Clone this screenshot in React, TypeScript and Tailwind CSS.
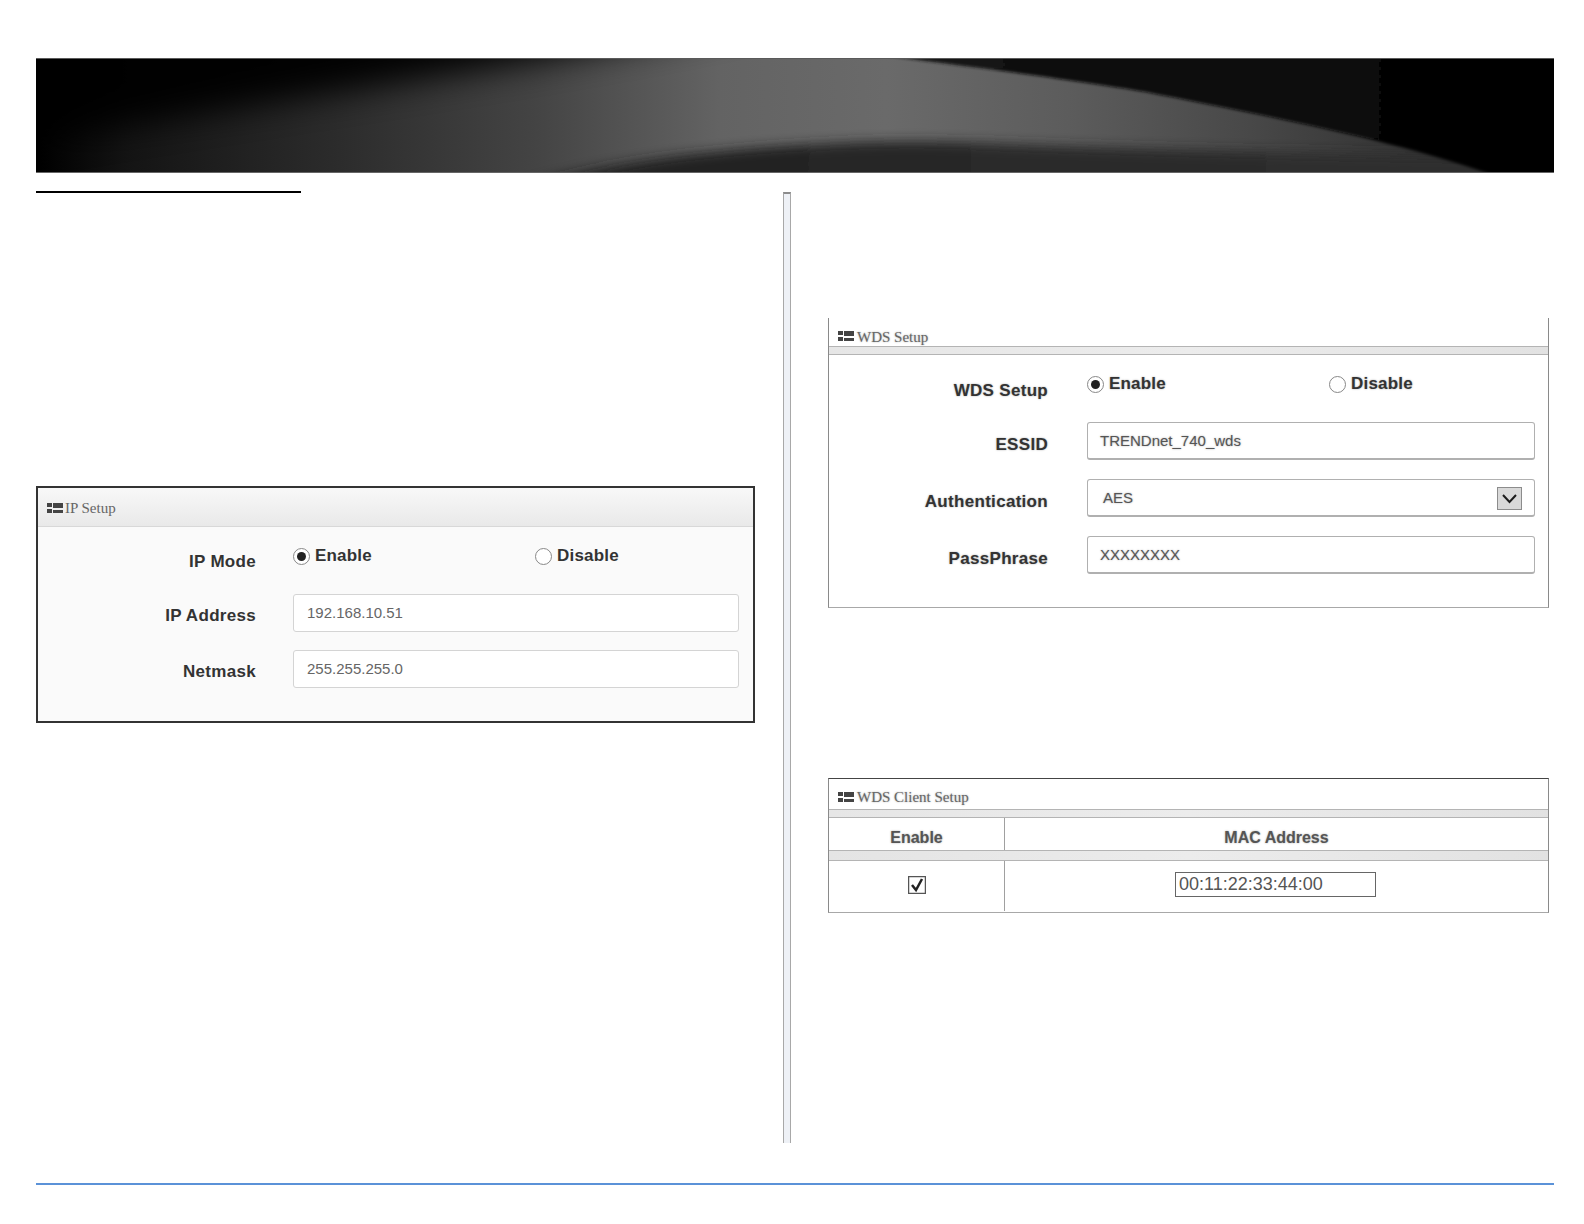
const sans = "font-['Liberation_Sans',Arial,sans-serif]";
const serif = "font-['Liberation_Serif','Times_New_Roman',serif]";
const halo = "[text-shadow:0_0_2px_#aaaaaa]";

const Banner = () => (
  <svg width="1518" height="115" viewBox="0 0 1518 115" className="block shrink-0">
    <defs>
      <linearGradient id="sweep" x1="0" x2="1" y1="0" y2="0">
        <stop offset="0" stopColor="#000000" />
        <stop offset="0.06" stopColor="#141414" />
        <stop offset="0.2" stopColor="#2c2c2c" />
        <stop offset="0.33" stopColor="#444444" />
        <stop offset="0.45" stopColor="#636363" />
        <stop offset="0.56" stopColor="#6a6a6a" />
        <stop offset="0.68" stopColor="#5c5c5c" />
        <stop offset="0.8" stopColor="#484848" />
        <stop offset="0.9" stopColor="#343434" />
        <stop offset="1" stopColor="#1e1e1e" />
      </linearGradient>
      <linearGradient id="low" x1="0" x2="1" y1="0" y2="0">
        <stop offset="0" stopColor="#1c1c1c" />
        <stop offset="0.5" stopColor="#2a2a2a" />
        <stop offset="1" stopColor="#303030" />
      </linearGradient>
      <linearGradient id="night" x1="0" x2="1" y1="0" y2="0">
        <stop offset="0" stopColor="#161616" />
        <stop offset="0.5" stopColor="#0c0c0c" />
        <stop offset="1" stopColor="#000000" />
      </linearGradient>
      <filter id="soft" x="-20%" y="-80%" width="140%" height="260%">
        <feGaussianBlur stdDeviation="30 16" />
      </filter>
      <filter id="softLow" x="-10%" y="-80%" width="120%" height="260%">
        <feGaussianBlur stdDeviation="14 6" />
      </filter>
      <filter id="edge" x="-5%" y="-10%" width="110%" height="120%">
        <feGaussianBlur stdDeviation="1.5" />
      </filter>
      <clipPath id="box">
        <rect width="1518" height="115" />
      </clipPath>
    </defs>
    <g clipPath="url(#box)">
      <rect width="1518" height="115" fill="url(#sweep)" />
      <path d="M-60 -40H720C520 6 240 40 -60 92Z" fill="#000000" filter="url(#soft)" opacity="0.95" />
      <path
        d="M430 150C520 112 640 94 764 87C830 83 880 82 950 85C1090 91 1300 96 1560 100V170H430Z"
        fill="url(#low)"
        filter="url(#softLow)"
      />
      <path
        d="M790 -10C880 2 1029 20 1110 34C1210 54 1366 82 1470 122H1540V-10Z"
        fill="url(#night)"
        filter="url(#edge)"
      />
    </g>
    <rect width="1518" height="1" fill="#5a5a5a" />
    <rect y="114" width="1518" height="1" fill="#666666" />
  </svg>
);

const PanelIcon = () => (
  <svg width="16" height="11" viewBox="0 0 16 11" className="shrink-0">
    <rect x="0" y="0" width="5" height="4" fill="#444" />
    <rect x="6" y="0" width="10" height="5" fill="#444" />
    <rect x="0" y="6" width="5" height="4" fill="#444" />
    <rect x="6" y="7" width="10" height="3" fill="#444" />
  </svg>
);

const Radio = ({ on }: { on?: boolean }) => (
  <span className="flex h-[17px] w-[17px] shrink-0 items-center justify-center rounded-full border border-[#888] bg-white">
    {on ? <span className="h-[9px] w-[9px] rounded-full bg-[#222]" /> : null}
  </span>
);

type RadioRowProps = {
  label: string;
  labelW: string;
  gap: string;
  heading: string;
  blur?: string;
};

const RadioRow = ({ label, labelW, gap, heading, blur = "" }: RadioRowProps) => (
  <div className={`flex h-[38px] ${blur}`}>
    <div className={`${labelW} ${heading} shrink-0 text-right text-[17px] font-bold tracking-[0.3px] text-[#333]`}>
      {label}
    </div>
    <div className={`${gap} flex w-[242px] shrink-0 items-center gap-[5px] text-[17px] font-bold tracking-[0.2px] text-[#333]`}>
      <Radio on />
      Enable
    </div>
    <div className="flex items-center gap-[5px] text-[17px] font-bold tracking-[0.2px] text-[#333]">
      <Radio />
      Disable
    </div>
  </div>
);

const IpField = ({ label, value }: { label: string; value: string }) => (
  <div className="flex h-[38px]">
    <div className="w-[218px] shrink-0 text-right text-[17px] leading-[44px] font-bold tracking-[0.3px] text-[#333]">
      {label}
    </div>
    <div className="ml-[37px] flex w-[446px] items-center rounded-[3px] border border-[#d4d4d4] bg-white pl-[13px] text-[15px] text-[#666]">
      {value}
    </div>
  </div>
);

const IpPanel = () => (
  <div className={`${sans} h-[237px] w-[719px] border-2 border-[#333] bg-[#fafafa]`}>
    <div className="flex h-[39px] items-center gap-[2px] border-b border-[#d8d8d8] bg-gradient-to-b from-[#f8f8f8] to-[#e9e9e9] pt-[2px] pl-[9px]">
      <PanelIcon />
      <span className={`${serif} text-[15px] text-[#666]`}>IP Setup</span>
    </div>
    <div className="flex flex-col gap-[19px] pt-[10px]">
      <RadioRow label="IP Mode" labelW="w-[218px]" gap="ml-[37px]" heading="leading-[50px]" />
      <div className="flex flex-col gap-[18px]">
        <IpField label="IP Address" value="192.168.10.51" />
        <IpField label="Netmask" value="255.255.255.0" />
      </div>
    </div>
  </div>
);

const Band = () => (
  <div className="h-[9px] border-y border-[#b4b4b4] bg-gradient-to-r from-[#e6e6e6] via-[#ececec] to-[#e2e2e2]" />
);

const WdsField = ({ label, children }: { label: string; children: React.ReactNode }) => (
  <div className="flex h-[38px]">
    <div className={`${halo} w-[219px] shrink-0 text-right text-[17px] leading-[46px] font-bold tracking-[0.3px] text-[#333]`}>
      {label}
    </div>
    <div className={`${halo} ml-[39px] flex w-[448px] items-center justify-between rounded-[3px] border border-b-2 border-[#b0b0b0] bg-white pt-[1px] pl-[12px] pr-[12px] text-[15px] text-[#555]`}>
      {children}
    </div>
  </div>
);

const SelectArrow = () => (
  <svg width="25" height="23" viewBox="0 0 25 23" className="shrink-0">
    <rect x="0.5" y="0.5" width="24" height="22" fill="#d9d9d9" stroke="#8c8c8c" />
    <path d="M6 8L12.5 15L19 8" fill="none" stroke="#1c1c1c" strokeWidth="2" />
  </svg>
);

const WdsPanel = () => (
  <div className={`${sans} ml-[37px] h-[290px] w-[721px] border-x border-b border-x-[#8a8a8a] border-b-[#a8a8a8] bg-white`}>
    <div className="flex h-[28px] items-center gap-[3px] pt-[9px] pl-[9px]">
      <PanelIcon />
      <span className={`${serif} ${halo} text-[15px] leading-[20px] text-[#666]`}>WDS Setup</span>
    </div>
    <Band />
    <div className="flex flex-col gap-[19px] pt-[10px]">
      <RadioRow label="WDS Setup" labelW="w-[219px]" gap="ml-[39px]" heading="leading-[52px]" blur={halo} />
      <div className="flex flex-col gap-[19px]">
        <WdsField label="ESSID">TRENDnet_740_wds</WdsField>
        <WdsField label="Authentication">
          <span className="pl-[3px]">AES</span>
          <SelectArrow />
        </WdsField>
        <WdsField label="PassPhrase">XXXXXXXX</WdsField>
      </div>
    </div>
  </div>
);

const ClientPanel = () => (
  <div className={`${sans} ml-[37px] h-[135px] w-[721px] border-x border-t border-b border-x-[#8a8a8a] border-t-[#444] border-b-[#a8a8a8] bg-white`}>
    <div className="flex h-[30px] items-center gap-[3px] pt-[6px] pl-[9px]">
      <PanelIcon />
      <span className={`${serif} ${halo} text-[15px] text-[#666]`}>WDS Client Setup</span>
    </div>
    <Band />
    <div className={`${halo} grid h-[32px] grid-cols-[176px_1fr] text-[16px] font-bold text-[#555]`}>
      <div className="flex items-center justify-center border-r border-[#a0a0a0] pt-[7px]">Enable</div>
      <div className="flex items-center justify-center pt-[7px]">MAC Address</div>
    </div>
    <div className="h-[11px] border-y border-[#b4b4b4] bg-gradient-to-r from-[#e4e4e4] via-[#ececec] to-[#e2e2e2]" />
    <div className="grid h-[50px] grid-cols-[176px_1fr]">
      <div className="flex items-center justify-center border-r border-[#a0a0a0]">
        <svg width="18" height="18" viewBox="0 0 18 18" className="-mt-[3px]">
          <rect x="0.5" y="0.5" width="17" height="17" fill="#fff" stroke="#555" strokeWidth="1.5" />
          <path d="M4 9L8 14L14 3" fill="none" stroke="#222" strokeWidth="2.5" />
        </svg>
      </div>
      <div className="flex items-center pb-[4px] pl-[170px]">
        <div className="flex h-[25px] w-[201px] items-center border border-[#666] pl-[3px] text-[18px] text-[#555]">
          00:11:22:33:44:00
        </div>
      </div>
    </div>
  </div>
);

export default function App() {
  return (
    <div className="flex h-[1224px] w-[1584px] flex-col bg-white pt-[58px] pl-[36px]">
      <Banner />
      <div className="mt-[18px] flex h-[952px]">
        <div className="w-[747px] shrink-0">
          <div className="h-[2px] w-[265px] bg-black" />
          <div className="mt-[293px]">
            <IpPanel />
          </div>
        </div>
        <div className="mt-[1px] h-[951px] w-[8px] shrink-0 border-x border-t-2 border-x-[#a8a8a8] border-t-[#8c8c8c] bg-[#eef1f6]" />
        <div className="flex-1">
          <div className="mt-[127px]">
            <WdsPanel />
          </div>
          <div className="mt-[170px]">
            <ClientPanel />
          </div>
        </div>
      </div>
      <div className="mt-[40px] h-[2px] w-[1518px] bg-[#5b92d8]" />
    </div>
  );
}
